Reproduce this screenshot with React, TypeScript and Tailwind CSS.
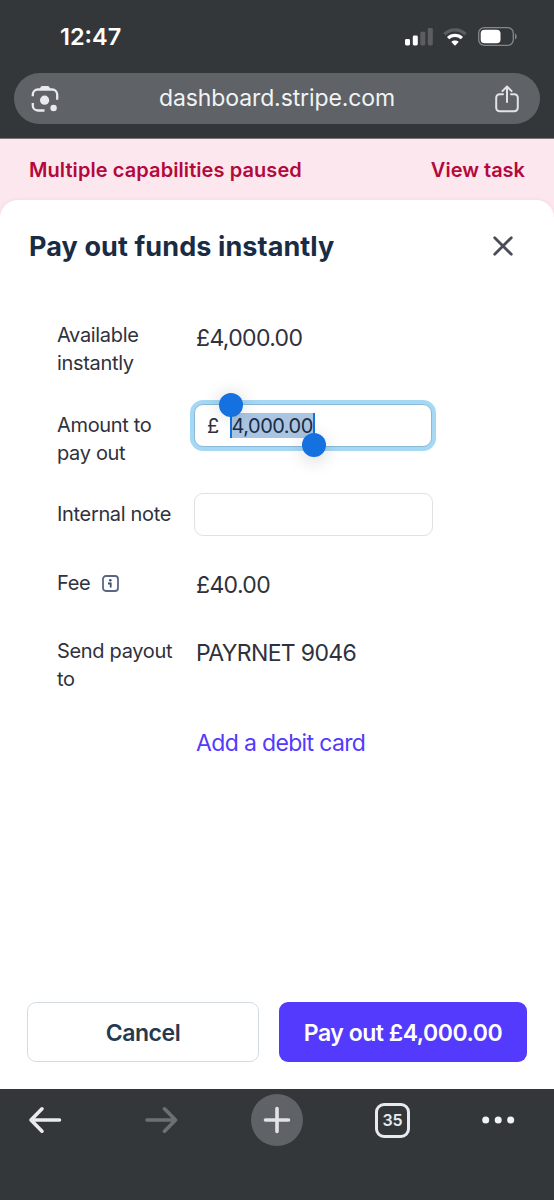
import type { ReactNode } from 'react';

interface FieldRowProps {
  label: ReactNode;
  children: ReactNode;
  className?: string;
}

const FieldRow = ({ label, children, className = '' }: FieldRowProps) => (
  <div className={`flex items-start ${className}`}>
    <div className="w-[137px] shrink-0 whitespace-pre-line pt-px text-[20px] leading-7 tracking-[-0.33px] text-[#30313d]">
      {label}
    </div>
    {children}
  </div>
);

const SignalIcon = () => (
  <svg width="28" height="18" viewBox="0 0 28 18" fill="#fff">
    <rect x="0" y="11" width="5" height="6.5" rx="1.4" />
    <rect x="7.8" y="7.5" width="5" height="10" rx="1.4" />
    <rect x="15.3" y="3.8" width="5" height="13.7" rx="1.4" fill="#5b5e61" />
    <rect x="22.8" y="0" width="5" height="17.5" rx="1.4" fill="#5b5e61" />
  </svg>
);

const WifiIcon = () => (
  <svg width="24" height="18" viewBox="0 0 24 18" fill="none" strokeWidth="3.3">
    <path d="M1.4 6.2C7.4.3 16.6.3 22.6 6.2" stroke="#5b5e61" />
    <path d="M5.1 10.1c3.9-3.7 9.9-3.7 13.8 0" stroke="#fff" />
    <path d="M12 17.7l-3.7-3.7c2.100-1.900 5.300-1.900 7.400 0z" fill="#fff" />
  </svg>
);

const BatteryIcon = () => (
  <svg width="39" height="19" viewBox="0 0 39 19" fill="none">
    <rect x=".7" y=".7" width="34.6" height="17.6" rx="5.5" stroke="#85888b" strokeWidth="1.3" />
    <rect x="2.7" y="2.7" width="19.8" height="13.6" rx="3.8" fill="#fff" />
    <path d="M37 6.5c2.2.9 2.2 5.1 0 6z" fill="#85888b" />
  </svg>
);

const LensIcon = () => (
  <svg width="28" height="28" viewBox="0 0 28 28" fill="none">
    <path
      d="M1.8 11.3V9.5a5 5 0 0 1 5-5h14.4a5 5 0 0 1 5 5v5.3M1.8 18v2.5a5 5 0 0 0 5 5h6.7"
      stroke="#e8eaed"
      strokeWidth="2.3"
    />
    <path d="M8.3 4.5l1.4-2.6C10.1 1.2 10.6.9 11.4.9h5.2c.8 0 1.3.3 1.7 1l1.4 2.6z" fill="#e8eaed" />
    <circle cx="13.6" cy="15.2" r="4.6" fill="#e8eaed" />
    <circle cx="22.6" cy="23" r="3.2" fill="#e8eaed" />
  </svg>
);

const ShareIcon = () => (
  <svg
    width="24"
    height="28"
    viewBox="0 0 24 28"
    fill="none"
    stroke="#e1e3e6"
    strokeWidth="2"
    strokeLinecap="round"
    strokeLinejoin="round"
  >
    <path d="M8 9.2H4.6a3.4 3.4 0 0 0-3.4 3.4v10.2a3.4 3.4 0 0 0 3.4 3.4h14.8a3.4 3.4 0 0 0 3.4-3.4V12.6a3.4 3.4 0 0 0-3.4-3.4H16" />
    <path d="M12 17V1.5M7.4 6.1L12 1.5l4.6 4.6" />
  </svg>
);

const InfoIcon = () => (
  <svg width="17" height="17" viewBox="0 0 17 17" fill="none">
    <rect x="1" y="1" width="15" height="15" rx="3" stroke="#596785" strokeWidth="1.8" />
    <circle cx="8.3" cy="5.2" r="1.3" fill="#414f6e" />
    <path d="M6 8.5h2.700v4" stroke="#414f6e" strokeWidth="1.8" />
  </svg>
);

const StatusBar = () => (
  <div className="flex h-[73px] items-center pl-[60px] pr-[37px]">
    <span className="flex-1 text-[23.5px] font-semibold leading-7 text-white">12:47</span>
    <div className="flex items-center">
      <SignalIcon />
      <span className="ml-[10px]">
        <WifiIcon />
      </span>
      <span className="ml-[11px]">
        <BatteryIcon />
      </span>
    </div>
  </div>
);

const AddressBar = () => (
  <div className="mx-[14px] flex h-[51px] items-center justify-between rounded-full bg-[#5f6367] pl-[17px] pr-[21px]">
    <LensIcon />
    <span className="pb-[2px] text-[23px] leading-7 tracking-[-0.1px] text-[#f1f3f4]">dashboard.stripe.com</span>
    <ShareIcon />
  </div>
);

const AmountInput = () => (
  <div className="mt-[-6px] flex h-[43px] w-[238px] items-center rounded-[9px] border border-[#8ab9d5] bg-white pl-[12px] text-[20px] text-[#30313d] shadow-[0_0_0_4px_#a4d8f5]">
    <span>£</span>
    <div className="relative ml-[11px] flex h-[25px] w-[85px] items-center bg-[#a9c5e2] pl-[2px] tracking-[-0.52px] text-[#1a2c44]">
      4,000.00
      {/* Selection handles */}
      <span className="absolute left-0 top-0 h-full w-[2px] bg-[#1570e0]" />
      <span className="absolute -left-[11px] -top-[20px] size-[24px] rounded-full bg-[#1570e0] shadow-[0_0_18px_rgba(0,0,0,0.16)]" />
      <span className="absolute right-0 top-0 h-full w-[2px] bg-[#1570e0]" />
      <span className="absolute -bottom-[19px] -right-[11px] size-[24px] rounded-full bg-[#1570e0] shadow-[0_4px_18px_rgba(0,0,0,0.16)]" />
    </div>
  </div>
);

const BrowserToolbar = () => (
  <div className="h-[111px] bg-[#34373a] pl-[28px] pt-[5px]">
    <div className="flex h-[52px] items-center">
      <svg
        width="34"
        height="28"
        viewBox="0 0 34 28"
        fill="none"
        stroke="#e8eaed"
        strokeWidth="3.6"
        strokeLinecap="round"
        strokeLinejoin="round"
      >
        <path d="M31.5 14H3M14 2.8L3 14l11 11.2" />
      </svg>
      <svg
        className="ml-[82px]"
        width="34"
        height="28"
        viewBox="0 0 34 28"
        fill="none"
        stroke="#6d7073"
        strokeWidth="3.6"
        strokeLinecap="round"
        strokeLinejoin="round"
      >
        <path d="M3 14h28.500M20.500 2.800l11 11.200-11 11.200" />
      </svg>
      <div className="ml-[73px] flex size-[52px] items-center justify-center rounded-full bg-[#5f6367]">
        <svg width="28" height="28" viewBox="0 0 28 28" stroke="#e1e3e6" strokeWidth="3.6" strokeLinecap="round">
          <path d="M14 2.500v23M2.500 14h23" />
        </svg>
      </div>
      <div className="ml-[72px] flex size-[35px] items-center justify-center rounded-[9px] border-[3px] border-[#e8eaed] text-[16px] font-semibold text-[#e8eaed]">
        35
      </div>
      <svg className="ml-[72px]" width="34" height="8" viewBox="0 0 34 8" fill="#f1f3f4">
        <circle cx="3.700" cy="4" r="3.500" />
        <circle cx="16.200" cy="4" r="3.500" />
        <circle cx="28.700" cy="4" r="3.500" />
      </svg>
    </div>
  </div>
);

const App = () => {
  return (
    <div className="flex h-[1200px] w-[554px] flex-col overflow-hidden bg-[#fde7ee] font-['Inter',sans-serif]">
      <header className="h-[139px] shrink-0 border-b border-[#77767a] bg-[#34373a]">
        <StatusBar />
        <AddressBar />
      </header>

      <div className="flex h-[61px] shrink-0 items-center justify-between px-[29px] text-[20px] font-semibold text-[#b3093c]">
        <span className="tracking-[0.08px]">Multiple capabilities paused</span>
        <span>View task</span>
      </div>

      <main className="flex flex-1 flex-col rounded-t-[18px] bg-white shadow-[0_0_4px_rgba(60,40,70,0.08)]">
        <div className="flex h-[92px] items-center justify-between pl-[29px] pr-[41px]">
          <h1 className="pt-px text-[27px] font-bold leading-9 tracking-[0.1px] text-[#1a2c44]">
            Pay out funds instantly
          </h1>
          <svg width="20" height="20" viewBox="0 0 20 20" stroke="#474e5a" strokeWidth="2.8" strokeLinecap="round">
            <path d="M1.7 1.7l16.6 16.6M18.3 1.700L1.7 18.3" />
          </svg>
        </div>

        <div className="flex flex-1 flex-col pl-[57px] pt-[28px] text-[23px] leading-7 tracking-[-0.65px] text-[#30313d]">
          <FieldRow label={'Available\ninstantly'} className="h-[90px]">
            <span className="pl-[2px] pt-[4px]">£4,000.00</span>
          </FieldRow>
          <FieldRow label={'Amount to\npay out'} className="h-[89px]">
            <AmountInput />
          </FieldRow>
          <FieldRow label="Internal note" className="h-[69px]">
            <div className="mt-[-6px] h-[43px] w-[239px] rounded-[9px] border-[1.5px] border-[#dfe1e4] bg-white" />
          </FieldRow>
          <FieldRow
            label={
              <span className="flex items-center gap-[12px]">
                Fee
                <InfoIcon />
              </span>
            }
            className="h-[68px]"
          >
            <span className="pl-[2px] pt-[3px]">£40.00</span>
          </FieldRow>
          <FieldRow label={'Send payout\nto'} className="h-[90px]">
            <span className="pl-[2px] pt-[3px]">PAYRNET 9046</span>
          </FieldRow>
          <FieldRow label="">
            <a className="pl-[2px] pt-[3px] text-[#533afd]">Add a debit card</a>
          </FieldRow>
        </div>

        <div className="flex h-[87px] gap-[20px] px-[27px] text-[23px] font-semibold tracking-[-0.48px]">
          <button className="h-[60px] w-[232px] rounded-[9px] border-[1.5px] border-[#d5dbe5] pt-[2px] text-[#273951]">
            Cancel
          </button>
          <button className="h-[60px] w-[248px] rounded-[9px] bg-[#533afd] pt-[2px] text-white">
            Pay out £4,000.00
          </button>
        </div>
      </main>

      <BrowserToolbar />
    </div>
  );
};

export default App;
